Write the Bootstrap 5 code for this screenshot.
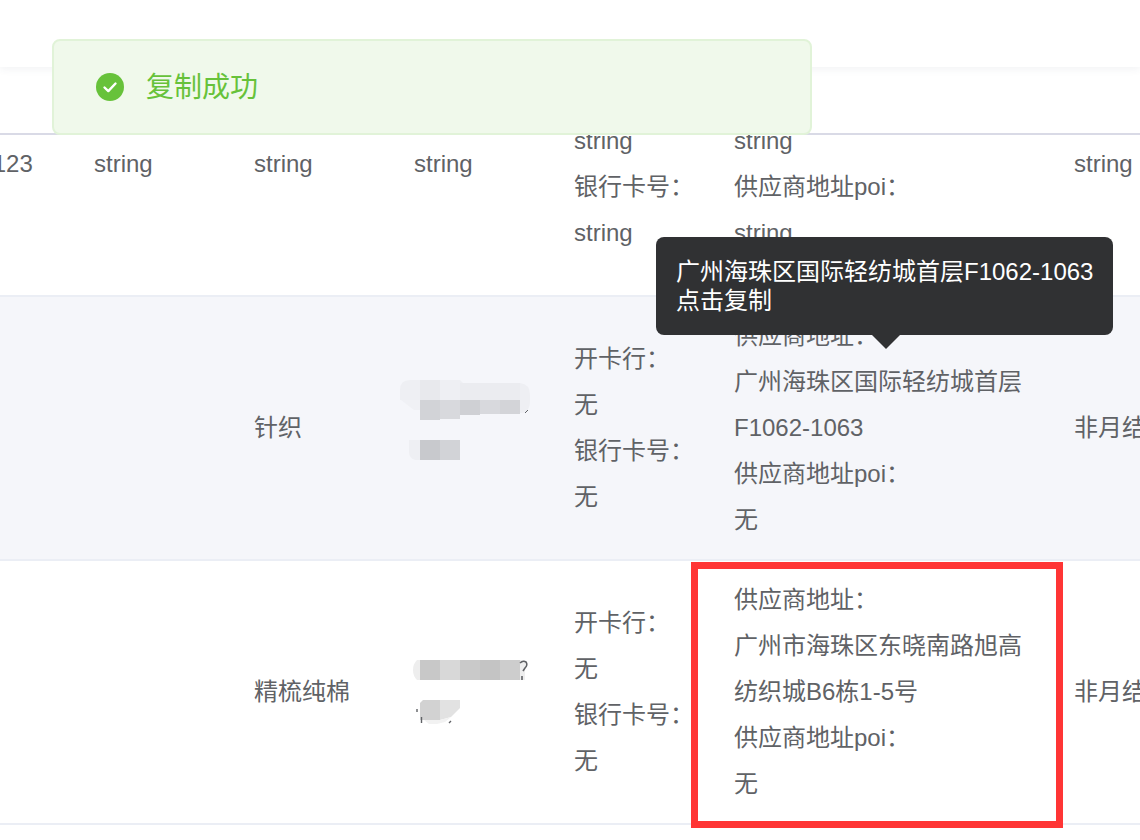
<!DOCTYPE html>
<html lang="zh-CN">
<head>
  <meta charset="UTF-8" />
  <meta name="viewport" content="width=device-width, initial-scale=1.0" />
  <title>供应商列表</title>
  <link href="https://cdn.jsdelivr.net/npm/bootstrap@5.3.0/dist/css/bootstrap.min.css" rel="stylesheet">
  <style>
    html, body {
      height: 840px;
      overflow: hidden;
      background: #fff;
    }
    body {
      font-family: "Liberation Sans", "Noto Sans CJK SC", sans-serif;
      font-size: 24px;
      color: #606266;
    }
    .top-strip {
      height: 67px;
      background: #fff;
      box-shadow: 0 2px 8px rgba(60, 70, 100, .07);
    }
    .head-gap { height: 66px; }
    .scroll-box {
      height: 707px;
      overflow: hidden;
      border-top: 2px solid #d9dae6;
    }
    .supplier-table {
      table-layout: fixed;
      width: 1300px;
      margin: -103px 0 0 -66px;
      color: #606266;
    }
    .supplier-table td {
      height: 264px;
      padding: 16px 40px 16px 0;
      line-height: 46px;
      vertical-align: middle;
      background: #fff;
      border-bottom: 2px solid #ebeef5;
      box-shadow: none;
    }
    .supplier-table tr.stripe td { background: #f5f6fa; }
    .w-std { width: 160px; }
    .w-addr { width: 340px; }
    .w-end { width: 200px; }
    .mosaic { display: block; margin-left: -14px; }
    .toast-msg {
      position: absolute;
      left: 52px;
      top: 39px;
      width: 760px;
      height: 96px;
      margin: 0;
      padding: 0 0 0 42px;
      gap: 22px;
      font-size: 28px;
      color: #67c23a;
      background: #f0f9eb;
      border: 2px solid #e1f3d8;
      border-radius: 8px;
    }
    .toast-msg span { padding-top: 2px; }
    .tip-box {
      position: absolute;
      left: 656px;
      top: 237px;
      width: 457px;
      height: 98px;
      padding: 20px;
      font-size: 24px;
      line-height: 29px;
      color: #fff;
      background: #303133;
      border-radius: 8px;
    }
    .tip-box::after {
      content: "";
      position: absolute;
      left: 216px;
      top: 98px;
      border: 14px solid transparent;
      border-top-color: #303133;
      border-bottom: 0;
    }
    .red-mark {
      position: absolute;
      left: 691px;
      top: 562px;
      width: 372px;
      height: 266px;
      border: 7px solid #ff3535;
    }
  </style>
</head>
<body>
  <div class="top-strip"></div>
  <div class="head-gap"></div>

  <div class="scroll-box">
    <table class="table supplier-table mb-0">
      <colgroup>
        <col class="w-std"><col class="w-std"><col class="w-std"><col class="w-std"><col class="w-std"><col class="w-addr"><col class="w-end">
      </colgroup>
      <tbody>
        <tr>
          <td class="text-nowrap">string123</td>
          <td>string</td>
          <td>string</td>
          <td>string</td>
          <td>
            <div>开卡行：</div>
            <div>string</div>
            <div>银行卡号：</div>
            <div>string</div>
          </td>
          <td>
            <div>供应商地址：</div>
            <div>string</div>
            <div>供应商地址poi：</div>
            <div>string</div>
          </td>
          <td>string</td>
        </tr>
        <tr class="stripe">
          <td></td>
          <td></td>
          <td>针织</td>
          <td>
            <svg class="mosaic" width="132" height="96" viewBox="400 380 132 96">
              <path d="M400 390q0-10 10-10h50l3 3h57q10 1 10 12v5h-130z" fill="#eeeff3"/>
              <rect x="420" y="380" width="20" height="20" fill="#e8e9ed"/>
              <rect x="460" y="383" width="60" height="17" fill="#ebecf0"/>
              <path d="M401 400h19v10h-6l-4-3z" fill="#f0f1f5"/>
              <rect x="420" y="400" width="20" height="20" fill="#d2d3d7"/>
              <rect x="440" y="400" width="20" height="19" fill="#d8d9dd"/>
              <rect x="460" y="400" width="20" height="15" fill="#cfd0d4"/>
              <rect x="480" y="400" width="20" height="14" fill="#d8d9dd"/>
              <rect x="500" y="400" width="20" height="14" fill="#d3d4d8"/>
              <path d="M520 400h10q0 13-9 13h-1z" fill="#eeeff3"/>
              <path d="M525 413l3-3" stroke="#606266" stroke-width="1"/>
              <path d="M409 440h11v20h-5q-6-2-6-8z" fill="#eeeff3"/>
              <rect x="420" y="440" width="20" height="20" fill="#c8c9cd"/>
              <rect x="440" y="440" width="20" height="20" fill="#d2d3d7"/>
            </svg>
          </td>
          <td>
            <div>开卡行：</div>
            <div>无</div>
            <div>银行卡号：</div>
            <div>无</div>
          </td>
          <td>
            <div>供应商地址：</div>
            <div>广州海珠区国际轻纺城首层F1062-1063</div>
            <div>供应商地址poi：</div>
            <div>无</div>
          </td>
          <td class="text-nowrap">非月结</td>
        </tr>
        <tr>
          <td></td>
          <td></td>
          <td>精梳纯棉</td>
          <td>
            <svg class="mosaic" width="132" height="96" viewBox="400 644 132 96">
              <path d="M420 660v20h-3q-4-4-4-10t4-10z" fill="#eeeeee"/>
              <rect x="420" y="660" width="20" height="20" fill="#c8c8c8"/>
              <rect x="440" y="660" width="20" height="20" fill="#d8d8d8"/>
              <rect x="460" y="660" width="20" height="20" fill="#c9c9c9"/>
              <rect x="480" y="660" width="20" height="20" fill="#c4c4c4"/>
              <rect x="500" y="660" width="20" height="20" fill="#cdcdcd"/>
              <rect x="520" y="660" width="5" height="20" fill="#eeeeee"/>
              <path d="M520 663q3-3 6-1q2 3-1 6l-2 3M522 676v4" fill="none" stroke="#606266" stroke-width="1.6"/>
              <path d="M423 700h17v20h-20v-17z" fill="#d2d2d2"/>
              <path d="M440 700h20v8l-9 9l-11 3z" fill="#e2e2e2"/>
              <path d="M424 720h16l11-3l-6 5l-8 2h-8z" fill="#f2f2f2"/>
              <path d="M417 709v3M421.500 717v6M449 723l2-2" stroke="#606266" stroke-width="1.4"/>
            </svg>
          </td>
          <td>
            <div>开卡行：</div>
            <div>无</div>
            <div>银行卡号：</div>
            <div>无</div>
          </td>
          <td>
            <div>供应商地址：</div>
            <div>广州市海珠区东晓南路旭高纺织城B6栋1-5号</div>
            <div>供应商地址poi：</div>
            <div>无</div>
          </td>
          <td class="text-nowrap">非月结</td>
        </tr>
      </tbody>
    </table>
  </div>

  <div class="alert toast-msg d-flex align-items-center" role="alert">
    <svg width="28" height="28" viewBox="0 0 28 28" aria-hidden="true">
      <circle cx="14" cy="14" r="14" fill="#67c23a"/>
      <path d="M8.500 14.500l3.800 3.600 7.200-7.600" fill="none" stroke="#fff" stroke-width="2.400" stroke-linecap="round" stroke-linejoin="round"/>
    </svg>
    <span>复制成功</span>
  </div>

  <div class="tip-box text-nowrap">广州海珠区国际轻纺城首层F1062-1063<br>点击复制</div>
  <div class="red-mark"></div>

  <script src="https://cdn.jsdelivr.net/npm/bootstrap@5.3.0/dist/js/bootstrap.bundle.min.js"></script>
</body>
</html>
